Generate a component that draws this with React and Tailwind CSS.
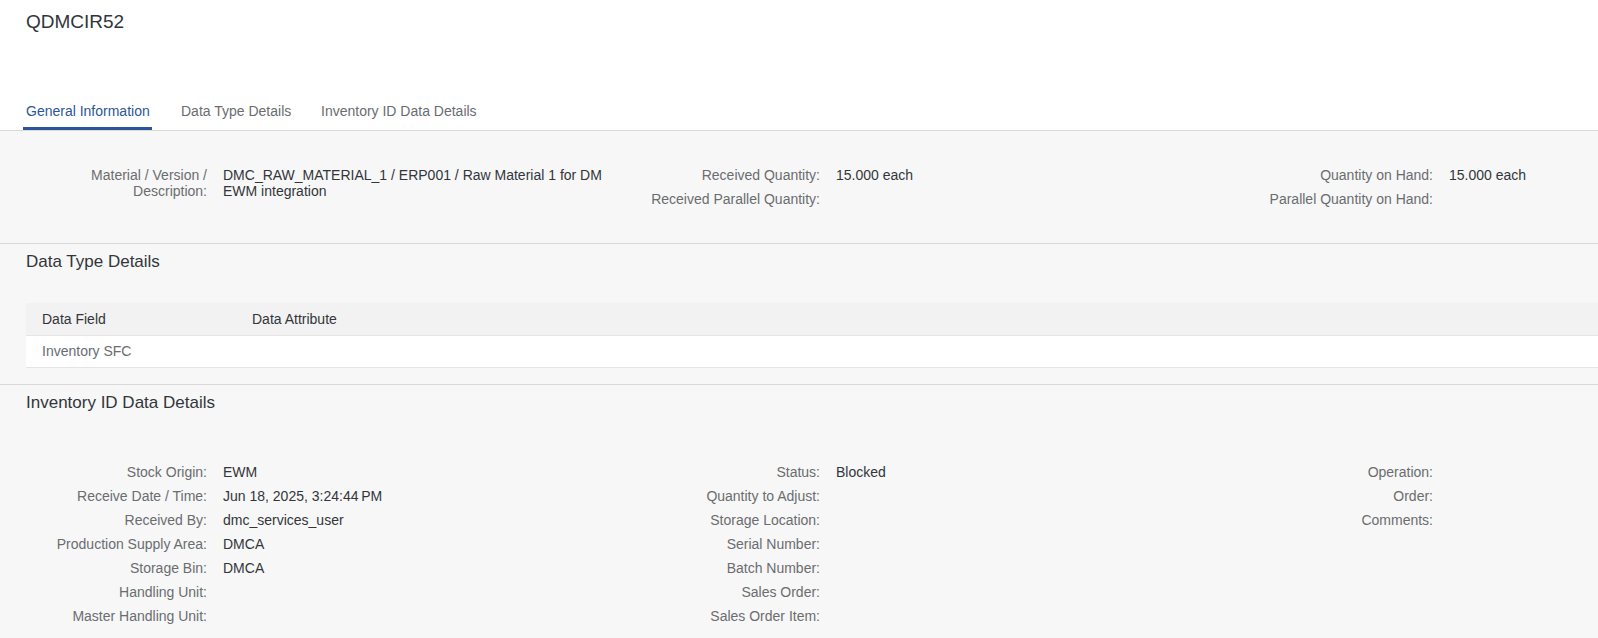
const FONT = "font-['Liberation_Sans',Arial,sans-serif]";

const generalInfo = [
  [
    {
      label: "Material / Version / Description:",
      value: "DMC_RAW_MATERIAL_1 / ERP001 / Raw Material 1 for DM EWM integration",
      labelWrap: true,
    },
  ],
  [
    { label: "Received Quantity:", value: "15.000 each" },
    { label: "Received Parallel Quantity:", value: "" },
  ],
  [
    { label: "Quantity on Hand:", value: "15.000 each" },
    { label: "Parallel Quantity on Hand:", value: "" },
  ],
];

const inventoryInfo = [
  [
    { label: "Stock Origin:", value: "EWM" },
    { label: "Receive Date / Time:", value: "Jun 18, 2025, 3:24:44\u202fPM" },
    { label: "Received By:", value: "dmc_services_user" },
    { label: "Production Supply Area:", value: "DMCA" },
    { label: "Storage Bin:", value: "DMCA" },
    { label: "Handling Unit:", value: "" },
    { label: "Master Handling Unit:", value: "" },
  ],
  [
    { label: "Status:", value: "Blocked" },
    { label: "Quantity to Adjust:", value: "" },
    { label: "Storage Location:", value: "" },
    { label: "Serial Number:", value: "" },
    { label: "Batch Number:", value: "" },
    { label: "Sales Order:", value: "" },
    { label: "Sales Order Item:", value: "" },
  ],
  [
    { label: "Operation:", value: "" },
    { label: "Order:", value: "" },
    { label: "Comments:", value: "" },
  ],
];

function FormColumn({ rows }) {
  return (
    <div className="w-[613px] shrink-0 grid grid-cols-[181px_1fr] gap-x-[16px] content-start">
      {rows.map((r) => (
        <div key={r.label} className="contents">
          <div className="py-[4px] text-right text-[#6a6d70] leading-[16px]">
            {r.labelWrap ? (
              <>
                Material / Version /
                <br />
                Description:
              </>
            ) : (
              r.label
            )}
          </div>
          <div className="py-[4px] text-[#32363a] leading-[16px] max-w-[395px]">
            {r.value}
          </div>
        </div>
      ))}
    </div>
  );
}

function Form({ columns }) {
  return (
    <div className="flex pl-[26px]">
      {columns.map((rows, i) => (
        <FormColumn key={i} rows={rows} />
      ))}
    </div>
  );
}

const tabs = [
  { name: "General Information", w: "w-[129px]", active: true },
  { name: "Data Type Details", w: "w-[114px]" },
  { name: "Inventory ID Data Details", w: "w-[180px]" },
];

export default function App() {
  return (
    <div className={`${FONT} w-full min-h-screen overflow-hidden bg-[#f7f7f7] text-[14px]`}>
      {/* Header + tabs */}
      <div className="bg-white h-[131px] flex flex-col justify-between border-b border-[#d9d9d9]">
        <h1 className="pl-[26px] pt-[10px] text-[19px] leading-[24px] text-[#32363a]">
          QDMCIR52
        </h1>
        <div className="flex gap-[26px] pl-[23px]">
          {tabs.map((t) => (
            <div
              key={t.name}
              className={`${t.w} pl-[3px] leading-[16px] pb-[8px] border-b-[3px] whitespace-nowrap ${
                t.active
                  ? "text-[#2b5797] border-[#2a5598]"
                  : "text-[#6a6d70] border-transparent"
              }`}
            >
              {t.name}
            </div>
          ))}
        </div>
      </div>

      {/* General information */}
      <div className="pt-[32px] pb-[32px] border-b border-[#d9d9d9]">
        <Form columns={generalInfo} />
      </div>

      {/* Data type details */}
      <div className="pt-[6px] pb-[16px] border-b border-[#d9d9d9]">
        <h2 className="pl-[26px] text-[17px] leading-[24px] text-[#32363a]">
          Data Type Details
        </h2>
        <div className="ml-[26px] mt-[29px]">
          <div className="h-[33px] bg-[#f2f2f2] border-b border-[#e5e5e5] flex items-center text-[#32363a]">
            <div className="w-[210px] pl-[16px]">Data Field</div>
            <div className="pl-[16px]">Data Attribute</div>
          </div>
          <div className="h-[32px] bg-white border-b border-[#e5e5e5] flex items-center text-[#6a6d70]">
            <div className="w-[210px] pl-[16px]">Inventory SFC</div>
            <div className="pl-[16px]"></div>
          </div>
        </div>
      </div>

      {/* Inventory ID data details */}
      <div className="pt-[6px] pb-[24px]">
        <h2 className="pl-[26px] text-[17px] leading-[24px] text-[#32363a]">
          Inventory ID Data Details
        </h2>
        <div className="mt-[45px]">
          <Form columns={inventoryInfo} />
        </div>
      </div>
    </div>
  );
}
